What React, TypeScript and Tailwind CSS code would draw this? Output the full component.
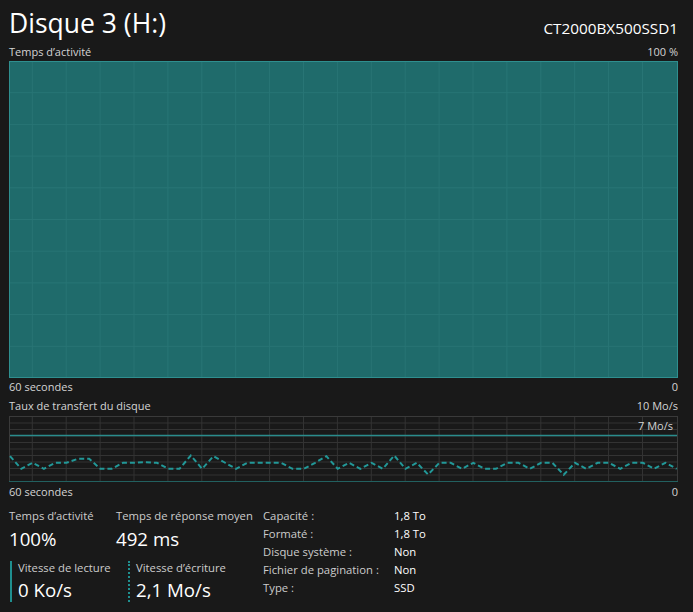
import React from "react";

const ys = [456.7,469.3,463.3,469.3,463.3,463.3,459.3,459.3,469.3,469.3,463.3,463.3,462.7,463.3,469.3,469.3,456,469.3,456.7,463,469.3,463.3,463.3,463.3,463.3,469.3,469.3,463.3,456.7,469.3,463.3,469.3,463.3,469.3,456,469.3,463.3,475,463.3,463.3,469.3,463.3,469.3,469.3,463.3,463.3,469.3,463.3,463.3,475.3,463.3,469.3,463.3,463.3,469.3,463.3,463.3,469.3,463.3,469.3];

const W = 669;
const vx = Array.from({ length: 19 }, (_, k) => 23.3 + k * 33.9);

function ActivityChart() {
  const H = 317;
  return (
    <svg width={W} height={H} viewBox={`0 0 ${W} ${H}`} className="block">
      <rect x="0" y="0" width={W} height={H} fill="#1f6b6b" />
      {vx.map((x, i) => (
        <line key={"v" + i} x1={x} y1={0} x2={x} y2={H} stroke="#287575" strokeWidth="1" />
      ))}
      {Array.from({ length: 9 }, (_, k) => 31.7 * (k + 1)).map((y, i) => (
        <line key={"h" + i} x1={0} y1={y} x2={W} y2={y} stroke="#287575" strokeWidth="1" />
      ))}
      <rect x="0.5" y="0.5" width={W - 1} height={H - 1} fill="none" stroke="#2f8f8f" strokeWidth="1" />
    </svg>
  );
}

function TransferChart() {
  const H = 66;
  const pts = ys.map((y, i) => `${(1 + i * 11.3).toFixed(1)},${(y - 416.5).toFixed(1)}`).join(" ");
  return (
    <svg width={W} height={H} viewBox={`0 0 ${W} ${H}`} className="block">
      {vx.map((x, i) => (
        <line key={"v" + i} x1={x} y1={0} x2={x} y2={H} stroke="#333333" strokeWidth="1" />
      ))}
      {Array.from({ length: 9 }, (_, k) => 0.5 + 6.5 * (k + 1)).map((y, i) => (
        <line key={"h" + i} x1={0} y1={y} x2={W} y2={y} stroke="#333333" strokeWidth="1" />
      ))}
      <line x1="0.5" y1="0" x2="0.5" y2={H} stroke="#3a3a3a" strokeWidth="1" />
      <line x1={W - 0.5} y1="0" x2={W - 0.5} y2={H} stroke="#3a3a3a" strokeWidth="1" />
      <line x1="0" y1="0.5" x2={W} y2="0.5" stroke="#3a3a3a" strokeWidth="1" />
      <line x1="0" y1={H - 0.5} x2={W} y2={H - 0.5} stroke="#22605f" strokeWidth="1" />
      <line x1="1" y1="19.5" x2={W - 1} y2="19.5" stroke="#2a8c8c" strokeWidth="1.3" />
      <polyline points={pts} fill="none" stroke="#229898" strokeWidth="2" strokeDasharray="5 3" />
    </svg>
  );
}

const props: [string, string][] = [
  ["Capacité :", "1,8 To"],
  ["Formaté :", "1,8 To"],
  ["Disque système :", "Non"],
  ["Fichier de pagination :", "Non"],
  ["Type :", "SSD"],
];

export default function App() {
  return (
    <div className="w-[693px] h-[612px] overflow-hidden bg-[#191919] text-[#d4d4d4] font-['Open_Sans','Noto_Sans',sans-serif] pl-[9px] pr-[15px]">
      {/* Title */}
      <div className="h-[45px] flex items-center justify-between">
        <div className="text-[26.5px] leading-[32px] text-white pt-[1px]">Disque 3 (H:)</div>
        <div className="text-[15.3px] leading-[20px] text-white pt-[10px]">CT2000BX500SSD1</div>
      </div>
      {/* Activity chart */}
      <div className="h-[16px] flex justify-between text-[11px] leading-[14px]">
        <span>Temps d’activité</span>
        <span>100 %</span>
      </div>
      <ActivityChart />
      <div className="h-[18px] flex justify-between text-[11px] leading-[18px]">
        <span>60 secondes</span>
        <span>0</span>
      </div>
      {/* Transfer chart */}
      <div className="h-[20px] flex justify-between text-[11px] leading-[20px]">
        <span>Taux de transfert du disque</span>
        <span>10 Mo/s</span>
      </div>
      <div className="relative">
        <TransferChart />
        <span className="absolute right-[5px] top-[3px] text-[11px] leading-[13px]">7 Mo/s</span>
      </div>
      <div className="h-[20px] flex justify-between text-[11px] leading-[20px]">
        <span>60 secondes</span>
        <span>0</span>
      </div>
      {/* Stats */}
      <div className="flex text-[11.3px]">
        <div className="w-[254px] pt-[6px]">
          <div className="flex">
            <div className="w-[107px]">
              <div className="h-[16px] leading-[16px] text-[#cccccc]">Temps d’activité</div>
              <div className="mt-[3px] text-[18.7px] leading-[24px] text-white">100%</div>
            </div>
            <div>
              <div className="h-[16px] leading-[16px] text-[#cccccc]">Temps de réponse moyen</div>
              <div className="mt-[3px] text-[18.7px] leading-[24px] text-white">492 ms</div>
            </div>
          </div>
          <div className="flex mt-[10px]">
            <div className="w-[119px] flex">
              <div className="w-[2px] h-[41px] bg-[#1f8f8f] ml-[1px]" />
              <div className="pl-[6px]">
                <div className="h-[13px] leading-[13px] text-[#cccccc]">Vitesse de lecture</div>
                <div className="mt-[4px] text-[18.7px] leading-[24px] text-white">0 Ko/s</div>
              </div>
            </div>
            <div className="flex">
              <div className="w-0 h-[41px] border-l-2 border-dotted border-[#1f8f8f]" />
              <div className="pl-[6px]">
                <div className="h-[13px] leading-[13px] text-[#cccccc]">Vitesse d’écriture</div>
                <div className="mt-[4px] text-[18.7px] leading-[24px] text-white">2,1 Mo/s</div>
              </div>
            </div>
          </div>
        </div>
        <div className="pt-[5px] flex flex-col">
          {props.map(([k, v]) => (
            <div key={k} className="h-[18px] leading-[18px] flex">
              <span className="w-[131px] text-[#cccccc]">{k}</span>
              <span className="text-white">{v}</span>
            </div>
          ))}
        </div>
      </div>
    </div>
  );
}
